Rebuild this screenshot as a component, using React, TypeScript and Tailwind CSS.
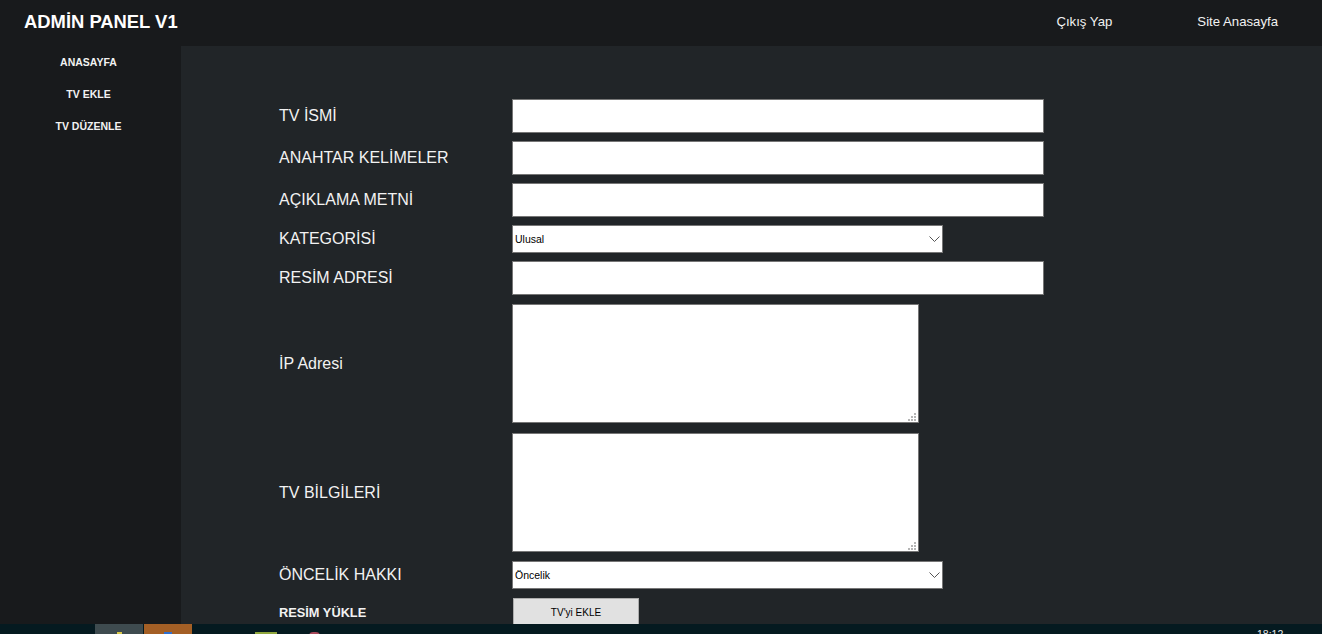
const arial = "font-['Liberation_Sans',Arial,sans-serif]";

const sideLinks = ['ANASAYFA', 'TV EKLE', 'TV DÜZENLE'];

const TextRow = ({ label, className }: { label: string; className: string }) => (
  <div className={`flex items-center ${className}`}>
    <label className="w-[234px] shrink-0 pl-px text-base text-[#f2f2f2]">{label}</label>
    <input type="text" className="h-full w-[532px] border border-[#767676] bg-white" />
  </div>
);

const SelectRow = ({ label, value, className }: { label: string; value: string; className: string }) => (
  <div className={`flex items-center ${className}`}>
    <label className="w-[234px] shrink-0 pl-px text-base text-[#f2f2f2]">{label}</label>
    <div className="flex h-full w-[431px] items-center justify-between border border-[#767676] bg-white pl-[2px] pr-[2px]">
      <span className="pt-px text-[10.5px] text-black">{value}</span>
      <svg width="11" height="6" viewBox="0 0 11 6" fill="none" stroke="#555" strokeWidth="1">
        <path d="M0.5 0.5 L5.5 5.5 L10.5 0.5" />
      </svg>
    </div>
  </div>
);

const AreaRow = ({ label, className }: { label: string; className: string }) => (
  <div className={`flex items-center ${className}`}>
    <label className="w-[234px] shrink-0 pl-px text-base text-[#f2f2f2]">{label}</label>
    <div className="relative h-full w-[407px]">
      <textarea className="block h-full w-full resize-none border border-[#767676] bg-white" />
      {/* resize grip */}
      <svg className="absolute bottom-[2px] right-[3px]" width="8" height="8" viewBox="0 0 8 8" fill="#b5b5b5">
        <rect x="6" y="0" width="2" height="2" />
        <rect x="3" y="3" width="2" height="2" />
        <rect x="6" y="3" width="2" height="2" />
        <rect x="0" y="6" width="2" height="2" />
        <rect x="3" y="6" width="2" height="2" />
        <rect x="6" y="6" width="2" height="2" />
      </svg>
    </div>
  </div>
);

export default function App() {
  return (
    <div className={`flex h-[634px] w-[1322px] flex-col overflow-hidden bg-[#181a1c] ${arial}`}>
      <header className="flex h-[46px] shrink-0 items-center justify-between pb-[3px] pl-6 pr-11">
        <h1 className="text-[18.4px] font-bold text-white">ADMİN PANEL V1</h1>
        <nav className="flex gap-[85px] text-[13.2px] text-[#f2f2f2]">
          <a>Çıkış Yap</a>
          <a>Site Anasayfa</a>
        </nav>
      </header>
      <div className="flex min-h-0 flex-1">
        <aside className="w-[181px] shrink-0 pr-[4px] pt-px">
          {sideLinks.map((link) => (
            <a key={link} className="flex h-8 items-center justify-center text-[10.5px] font-bold text-[#f2f2f2]">
              {link}
            </a>
          ))}
        </aside>
        <main className="min-w-0 flex-1 bg-[#212528] pl-[97px] pt-[53px]">
          <form className="flex flex-col">
            <TextRow label="TV İSMİ" className="h-[34px]" />
            <TextRow label="ANAHTAR KELİMELER" className="mt-2 h-[34px]" />
            <TextRow label="AÇIKLAMA METNİ" className="mt-2 h-[34px]" />
            <SelectRow label="KATEGORİSİ" value="Ulusal" className="mt-2 h-7" />
            <TextRow label="RESİM ADRESİ" className="mt-2 h-[34px]" />
            <AreaRow label="İP Adresi" className="mt-[9px] h-[119px]" />
            <AreaRow label="TV BİLGİLERİ" className="mt-[10px] h-[119px]" />
            <SelectRow label="ÖNCELİK HAKKI" value="Öncelik" className="mt-[9px] h-7" />
            <div className="mt-[9px] flex h-7 items-center">
              <span className="w-[234px] shrink-0 pl-px pt-[1px] text-[12.8px] font-bold text-[#f2f2f2]">RESİM YÜKLE</span>
              <button type="button" className="ml-px h-7 w-[126px] border border-[#adadad] bg-[#e1e1e1] text-[10px] text-black">
                TV'yi EKLE
              </button>
            </div>
          </form>
        </main>
      </div>
      <footer className="relative h-[10px] shrink-0 overflow-hidden bg-[#051a20]">
        <div className="absolute left-[95px] top-0 flex h-full">
          <div className="flex h-full w-[48px] justify-center bg-[#3e4b4f] pt-2">
            <span className="h-[4px] w-[5px] bg-[#d8c84a]" />
          </div>
          <div className="ml-px flex h-full w-[48px] justify-center bg-[#a45f25] pt-2">
            <span className="h-[4px] w-[8px] bg-[#2f6fd0]" />
          </div>
        </div>
        <span className="absolute left-[255px] top-2 h-[4px] w-[22px] bg-[#8fa63c]" />
        <span className="absolute left-[309px] top-2 h-[4px] w-[11px] rounded-t-full bg-[#a8485a]" />
        <span className="absolute left-[1257px] top-[5px] text-[10.5px] leading-none text-[#e8e8e8]">18:12</span>
      </footer>
    </div>
  );
}
